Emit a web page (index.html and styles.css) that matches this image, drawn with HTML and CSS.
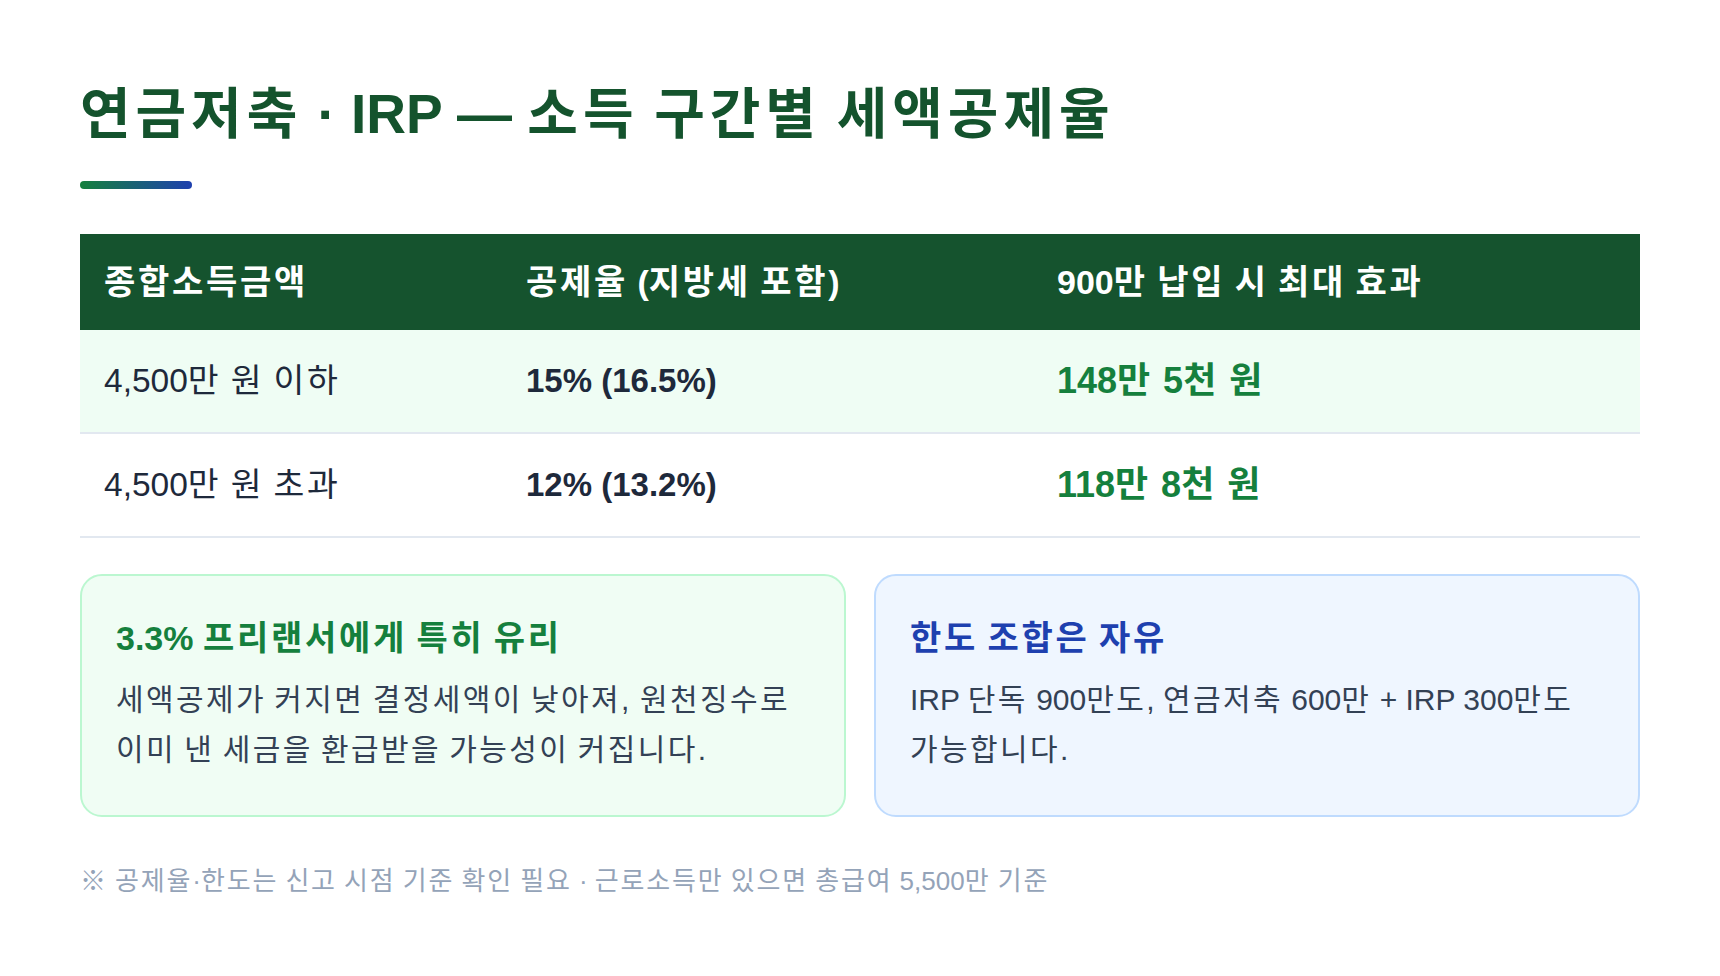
FILE: index.html
```html
<!DOCTYPE html>
<html lang="ko">
<head>
<meta charset="utf-8">
<title>연금저축 · IRP — 소득 구간별 세액공제율</title>
<link rel="stylesheet" href="styles.css">
</head>
<body>
<main class="page">
  <h1 class="title">연금저축<span class="lat"> · IRP — </span>소득 구간별 세액공제율</h1>
  <div class="accent"></div>

  <table class="rates">
    <colgroup>
      <col class="c1"><col class="c2"><col class="c3">
    </colgroup>
    <thead>
      <tr>
        <th>종합소득금액</th>
        <th>공제율 <span class="lat">(</span>지방세 포함<span class="lat">)</span></th>
        <th><span class="lat">900</span>만 납입 시 최대 효과</th>
      </tr>
    </thead>
    <tbody>
      <tr class="hl">
        <td><span class="lat">4,500</span>만 원 이하</td>
        <td class="rate">15% (16.5%)</td>
        <td class="effect"><span class="lat">148</span>만 <span class="lat">5</span>천 원</td>
      </tr>
      <tr>
        <td><span class="lat">4,500</span>만 원 초과</td>
        <td class="rate">12% (13.2%)</td>
        <td class="effect"><span class="lat">118</span>만 <span class="lat">8</span>천 원</td>
      </tr>
    </tbody>
  </table>

  <div class="cards">
    <section class="card card-green">
      <h2 class="card-title"><span class="lat">3.3% </span>프리랜서에게 특히 유리</h2>
      <p class="card-body">세액공제가 커지면 결정세액이 낮아져, 원천징수로 이미 낸 세금을 환급받을 가능성이 커집니다.</p>
    </section>
    <section class="card card-blue">
      <h2 class="card-title">한도 조합은 자유</h2>
      <p class="card-body"><span class="line"><span class="lat">IRP </span>단독 <span class="lat">900</span>만도<span class="lat">,</span> 연금저축 <span class="lat">600</span>만<span class="lat"> + IRP 300</span>만도</span><span class="line">가능합니다.</span></p>
    </section>
  </div>

  <p class="note">※ 공제율<span class="lat">·</span>한도는 신고 시점 기준 확인 필요<span class="lat"> · </span>근로소득만 있으면 총급여 <span class="lat">5,500</span>만 기준</p>
</main>
</body>
</html>
```

FILE: styles.css
```css
* { box-sizing: border-box; }

html, body {
  margin: 0;
  padding: 0;
  background: #ffffff;
}

body {
  font-family: "Liberation Sans", "Noto Sans CJK KR", sans-serif;
  color: #1e293b;
  word-break: keep-all;
}

.title,
.rates th,
.rates td,
.card-title,
.card-body,
.note {
  letter-spacing: 0.08em;
  word-spacing: -0.08em;
}

.lat {
  letter-spacing: 0;
  word-spacing: 0;
}

.line {
  display: block;
}

.page {
  padding: 80px 80px 0 80px;
  display: flex;
  flex-direction: column;
}

.title {
  margin: 0;
  font-size: 55px;
  line-height: 68px;
  font-weight: 700;
  letter-spacing: 0.09em;
  color: #14532d;
}

.accent {
  width: 112px;
  height: 8px;
  border-radius: 4px;
  margin-top: 33px;
  background: linear-gradient(90deg, #15803d 0%, #1e40af 100%);
}

.rates {
  margin-top: 45px;
  width: 100%;
  border-collapse: collapse;
  table-layout: fixed;
}

.rates .c1 { width: 422px; }
.rates .c2 { width: 531px; }

.rates th {
  background: #15532e;
  color: #ffffff;
  font-size: 34px;
  font-weight: 700;
  text-align: left;
  line-height: 46px;
  padding: 25px 24px;
}

.rates td {
  font-size: 33.5px;
  line-height: 46px;
  padding: 28px 24px;
  border-bottom: 2px solid #e2e8f0;
  color: #1e293b;
}

.rates tr.hl td {
  background: #effdf4;
}

.rates td.rate {
  font-size: 33px;
  font-weight: 700;
  letter-spacing: 0;
  word-spacing: 0;
}

.rates td.effect {
  font-size: 36px;
  font-weight: 700;
  color: #15803d;
}

.cards {
  margin-top: 36px;
  display: grid;
  grid-template-columns: 1fr 1fr;
  gap: 28px;
}

.card {
  border-radius: 22px;
  border: 2px solid;
  padding: 40px 34px 40px 34px;
}

.card-green {
  background: #f0fdf4;
  border-color: #bbf7d0;
}

.card-blue {
  background: #eff6ff;
  border-color: #bfdbfe;
}

.card-title {
  margin: 0;
  font-size: 34px;
  line-height: 44px;
  font-weight: 700;
}

.card-green .card-title { color: #15803d; }
.card-blue .card-title { color: #1e40af; }

.card-body {
  margin: 15px 0 0 0;
  font-size: 30px;
  line-height: 50px;
  color: #334155;
}

.note {
  margin: 46px 0 0 0;
  font-size: 26px;
  line-height: 36px;
  letter-spacing: 0.07em;
  word-spacing: -0.07em;
  color: #94a3b8;
}
```
